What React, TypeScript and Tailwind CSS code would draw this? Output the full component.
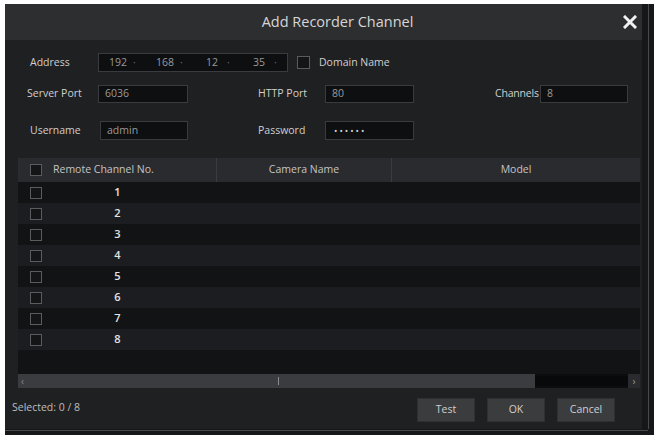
import React from 'react'

const font = { fontFamily: '"Open Sans", "Liberation Sans", sans-serif' }

function Box({ className = '' }: { className?: string }) {
  return <span className={`block h-[12px] w-[12px] border border-[#5a5b5e] bg-[#141517] ${className}`} />
}

function Field({ w, children }: { w: string; children?: React.ReactNode }) {
  return (
    <div className={`flex h-full items-center border border-[#3a3b3e] bg-[#0e0f11] pl-[6px] text-[10.5px] text-[#9a9a9a] ${w}`}>
      {children}
    </div>
  )
}

const rows = [1, 2, 3, 4, 5, 6, 7, 8]

export default function App() {
  return (
    <div className="flex h-[435px] w-[654px] flex-col overflow-hidden bg-white pl-[5px] pt-[4px]" style={font}>
      <div className="flex flex-1 flex-col bg-[#161719]">
        <div className="flex">
          <div className="flex h-[425px] w-[637px] flex-col bg-[#1f2022]">
            {/* title bar */}
            <div className="flex h-[36px] items-center bg-[#2d2e30]">
              <div className="w-[52px]" />
              <div className="flex-1 text-center text-[14.5px] text-[#d6d6d6]">Add Recorder Channel</div>
              <div className="flex w-[24px] justify-center">
                <svg width="14" height="14" viewBox="0 0 14 14">
                  <path d="M2 2 L12 12 M12 2 L2 12" stroke="#f2f2f2" strokeWidth="3" strokeLinecap="square" />
                </svg>
              </div>
            </div>

            {/* form */}
            <div className="flex flex-col pt-[13px] text-[10.5px] text-[#cfcfcf]">
              <div className="flex h-[19px] items-center pl-[25px]">
                <span className="w-[68px]">Address</span>
                <div className="grid h-full w-[190px] grid-cols-4 border border-[#3a3b3e] bg-[#0e0f11] text-[10.5px] text-[#9a9a9a]">
                  {['192', '168', '12', '35'].map((n) => (
                    <div key={n} className="flex items-center pl-[8px]">
                      <span className="w-[22px] text-center">{n}</span>
                      <span className="ml-[4px] text-[#6a6a6a]">·</span>
                    </div>
                  ))}
                </div>
                <Box className="ml-[9px] h-[13px] w-[13px]" />
                <span className="ml-[9px]">Domain Name</span>
              </div>

              <div className="mt-[13px] flex h-[18px] items-center pl-[22px]">
                <span className="w-[71px]">Server Port</span>
                <Field w="w-[90px]">6036</Field>
                <span className="ml-[70px] w-[67px]">HTTP Port</span>
                <Field w="w-[89px]">80</Field>
                <span className="ml-[81px] w-[45px] whitespace-nowrap tracking-[-0.2px]">Channels</span>
                <Field w="w-[88px]">8</Field>
              </div>

              <div className="mt-[18px] flex h-[19px] items-center pl-[25px]">
                <span className="w-[70px]">Username</span>
                <Field w="w-[88px]">admin</Field>
                <span className="ml-[70px] w-[67px]">Password</span>
                <Field w="w-[89px]">
                  <span className="pl-[2px] text-[9px] tracking-[2px] text-[#d4d4d4]">••••••</span>
                </Field>
              </div>
            </div>

            {/* table */}
            <div className="ml-[13px] mt-[18px] flex w-[622px] flex-col">
              <div className="flex h-[24px] items-center bg-[#2a2b2e] text-[10.5px] text-[#c4c4c4]">
                <div className="flex h-full w-[199px] items-center border-r border-[#3b3c3f] pl-[12px]">
                  <Box />
                  <span className="ml-[11px]">Remote Channel No.</span>
                </div>
                <div className="flex h-full w-[175px] items-center justify-center border-r border-[#3b3c3f]">Camera Name</div>
                <div className="flex h-full flex-1 items-center justify-center">Model</div>
              </div>
              <div className="flex h-[192px] flex-col bg-[#121315]">
                {rows.map((n) => (
                  <div key={n} className={`flex h-[21px] items-center ${n % 2 === 0 ? 'bg-[#1c1d20]' : 'bg-[#121315]'}`}>
                    <div className="flex w-[199px] items-center pl-[12px]">
                      <Box />
                      <span className="flex-1 pr-[24px] text-center text-[11px] font-semibold text-[#e4e4e4]">{n}</span>
                    </div>
                  </div>
                ))}
              </div>
              {/* horizontal scrollbar */}
              <div className="flex h-[14px] items-center bg-[#0c0d0f]">
                <div className="relative flex h-full w-[517px] items-center bg-[#3b3c3f]">
                  <span className="pl-[3px] text-[10px] leading-none text-[#8a8a8a]">‹</span>
                  <span className="absolute left-[260px] top-[3px] h-[8px] w-[1px] bg-[#8a8a8a]" />
                </div>
                <div className="h-[10px] flex-1 bg-[#08090a]" />
                <div className="flex h-full w-[12px] items-center justify-center bg-[#2a2b2e] text-[10px] leading-none text-[#9a9a9a]">›</div>
              </div>
            </div>

            {/* footer */}
            <div className="mt-[8px] flex items-start pl-[7px] pr-[27px]">
              <span className="mt-[4px] text-[10.5px] text-[#bdbdbd]">Selected: 0 / 8</span>
              <div className="ml-auto mt-[2px] flex gap-[12px]">
                {['Test', 'OK', 'Cancel'].map((b) => (
                  <div
                    key={b}
                    className="flex h-[24px] w-[58px] items-center justify-center border border-[#2f3033] bg-[#3b3c3e] text-[10.5px] text-[#cfcfcf]"
                  >
                    {b}
                  </div>
                ))}
              </div>
            </div>
          </div>
          <div className="w-[6px]" />
          <div className="w-[1px] bg-[#48494c]" />
        </div>
        <div className="mt-[1px] h-[1px] w-[643px] bg-[#48494c]" />
      </div>
    </div>
  )
}
